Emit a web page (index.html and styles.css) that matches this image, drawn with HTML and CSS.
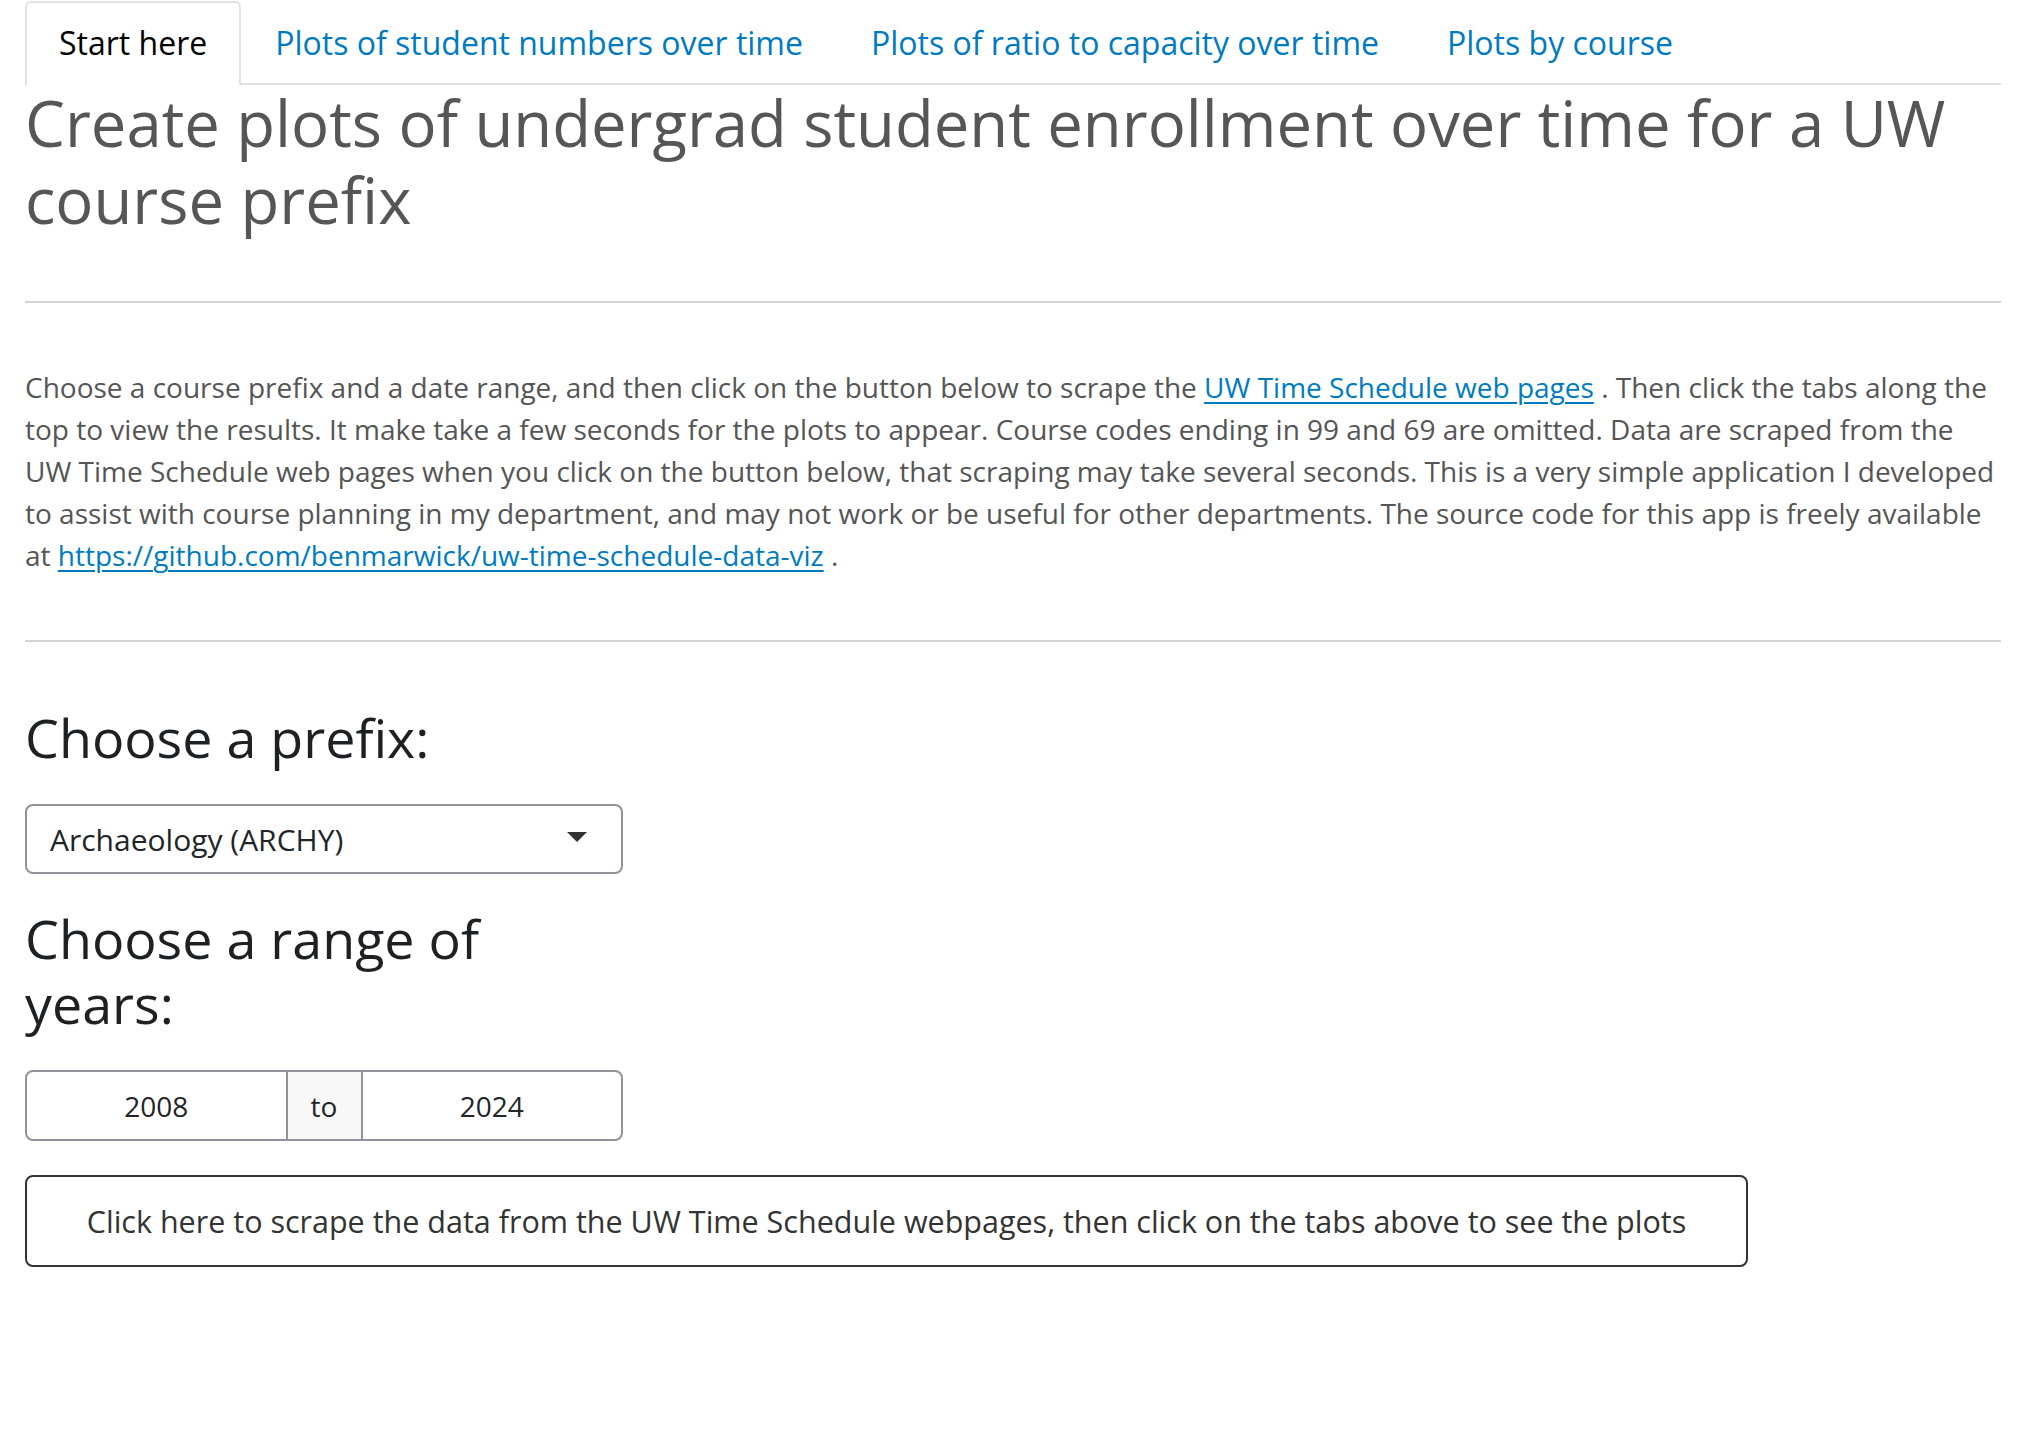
FILE: index.html
```html
<!DOCTYPE html>
<html lang="en">
<head>
<meta charset="utf-8">
<title>UW Time Schedule data viz</title>
<link rel="stylesheet" href="styles.css">
</head>
<body>
<div class="page">
  <nav class="tabs">
    <a class="tab active" href="#">Start here</a>
    <a class="tab" href="#">Plots of student numbers over time</a>
    <a class="tab" href="#">Plots of ratio to capacity over time</a>
    <a class="tab" href="#">Plots by course</a>
  </nav>
  <h2 class="title">Create plots of undergrad student enrollment over time for a UW course prefix</h2>
  <hr class="rule">
  <p class="intro">Choose a course prefix and a date range, and then click on the button below to scrape the <a href="#">UW Time Schedule web pages</a> . Then click the tabs along the top to view the results. It make take a few seconds for the plots to appear. Course codes ending in 99 and 69 are omitted. Data are scraped from the UW Time Schedule web pages when you click on the button below, that scraping may take several seconds. This is a very simple application I developed to assist with course planning in my department, and may not work or be useful for other departments. The source code for this app is freely available at <a href="#">https://github.com/benmarwick/uw-time-schedule-data-viz</a> .</p>
  <hr class="rule">
  <div class="form">
    <h3 class="label first">Choose a prefix:</h3>
    <div class="select">
      <span class="select-value">Archaeology (ARCHY)</span>
      <svg class="caret" width="20" height="10" viewBox="0 0 20 10"><path d="M0 0 L20 0 L10 10 Z" fill="#333"/></svg>
    </div>
    <h3 class="label">Choose a range of years:</h3>
    <div class="range">
      <span class="range-cell">2008</span>
      <span class="range-addon">to</span>
      <span class="range-cell">2024</span>
    </div>
  </div>
  <button class="scrape" type="button">Click here to scrape the data from the UW Time Schedule webpages, then click on the tabs above to see the plots</button>
</div>
</body>
</html>
```
FILE: styles.css
```css
html, body {
  margin: 0;
  padding: 0;
  background: #ffffff;
}

body {
  font-family: "Open Sans", "Noto Sans", "Liberation Sans", sans-serif;
  color: #212529;
}

.page {
  padding: 1px 25px 0 25px;
}

.tabs {
  display: flex;
  border-bottom: 2px solid #dee2e6;
}

.tab {
  display: block;
  font-size: 32px;
  line-height: 48px;
  padding: 16px 32px 18px 32px;
  border: 2px solid transparent;
  border-bottom: 0;
  margin-bottom: -2px;
  color: #007bc2;
  text-decoration: none;
  border-radius: 6px 6px 0 0;
}

.tab.active {
  color: #000000;
  background: #ffffff;
  border-color: #dee2e6;
}

.title {
  margin: 0 0 62px 0;
  font-size: 63.4px;
  line-height: 76.8px;
  font-weight: 400;
  color: #565656;
}

.rule {
  margin: 0;
  border: 0;
  border-top: 2px solid #d4d4d4;
  height: 0;
}

.intro {
  margin: 63px 0 63px 0;
  font-size: 28px;
  line-height: 42.2px;
  color: #555555;
}

.intro a {
  color: #007bc2;
  text-decoration: underline;
  text-underline-offset: 4px;
  text-decoration-thickness: 2px;
}

.form {
  width: 598px;
}

.label {
  margin: 32px 0 35px 0;
  font-size: 53.8px;
  line-height: 1.2;
  font-weight: 500;
  color: #1e2124;
}

.label.first {
  margin-top: 63px;
}

.select {
  box-sizing: border-box;
  height: 70px;
  border: 2px solid #8f949c;
  border-radius: 8px;
  display: flex;
  align-items: center;
  justify-content: space-between;
  padding: 0 34px 0 23px;
  font-size: 30px;
  color: #212529;
}

.caret {
  display: block;
  margin-top: -4px;
}

.range {
  box-sizing: border-box;
  height: 71px;
  border: 2px solid #8f949c;
  border-radius: 8px;
  display: flex;
  font-size: 28px;
  color: #212529;
}

.range-cell {
  flex: 1;
  display: flex;
  align-items: center;
  justify-content: center;
}

.range-addon {
  box-sizing: border-box;
  width: 77px;
  display: flex;
  align-items: center;
  justify-content: center;
  background: #f8f8f8;
  border-left: 2px solid #8f949c;
  border-right: 2px solid #8f949c;
}

.scrape {
  display: block;
  margin-top: 34px;
  box-sizing: border-box;
  width: 1723px;
  height: 92px;
  padding: 0;
  border: 2px solid #333333;
  border-radius: 8px;
  background: #ffffff;
  font-family: "Open Sans", "Noto Sans", "Liberation Sans", sans-serif;
  font-size: 30.5px;
  line-height: 42px;
  font-weight: 500;
  color: #333333;
  text-align: center;
}
```
